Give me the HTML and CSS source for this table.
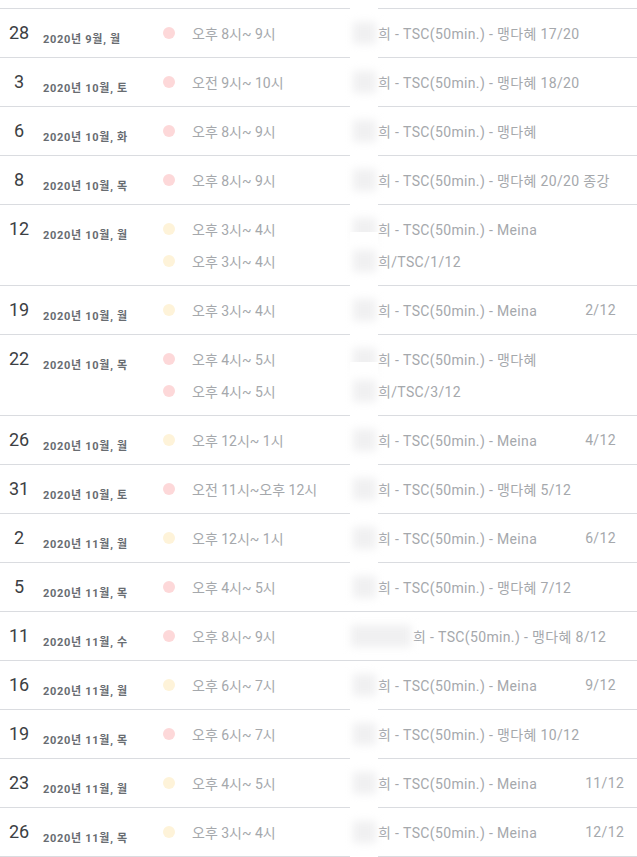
FILE: index.html
```html
<!DOCTYPE html>
<html lang="ko">
<head>
    <meta charset="UTF-8">
    <title>일정</title>
    <link rel="stylesheet" href="styles.css">
</head>
<body>
    <div class="agenda">
        <div class="day">
            <div class="date"><span class="num">28</span><span class="sub">2020년 9월, 월</span></div>
            <div class="events">
                <div class="event"><span class="dot pink"></span><span class="time">오후 8시~ 9시</span><span class="title"><span class="redact"></span>희 - TSC(50min.) - 맹다혜 17/20</span></div>
            </div>
        </div>
        <div class="day">
            <div class="date"><span class="num">3</span><span class="sub">2020년 10월, 토</span></div>
            <div class="events">
                <div class="event"><span class="dot pink"></span><span class="time">오전 9시~ 10시</span><span class="title"><span class="redact"></span>희 - TSC(50min.) - 맹다혜 18/20</span></div>
            </div>
        </div>
        <div class="day">
            <div class="date"><span class="num">6</span><span class="sub">2020년 10월, 화</span></div>
            <div class="events">
                <div class="event"><span class="dot pink"></span><span class="time">오후 8시~ 9시</span><span class="title"><span class="redact"></span>희 - TSC(50min.) - 맹다혜</span></div>
            </div>
        </div>
        <div class="day">
            <div class="date"><span class="num">8</span><span class="sub">2020년 10월, 목</span></div>
            <div class="events">
                <div class="event"><span class="dot pink"></span><span class="time">오후 8시~ 9시</span><span class="title"><span class="redact"></span>희 - TSC(50min.) - 맹다혜 20/20 종강</span></div>
            </div>
        </div>
        <div class="day">
            <div class="date"><span class="num">12</span><span class="sub">2020년 10월, 월</span></div>
            <div class="events">
                <div class="event"><span class="dot yellow"></span><span class="time">오후 3시~ 4시</span><span class="title"><span class="redact"></span>희 - TSC(50min.) - Meina</span></div>
                <div class="event"><span class="dot yellow"></span><span class="time">오후 3시~ 4시</span><span class="title"><span class="redact"></span>희/TSC/1/12</span></div>
            </div>
        </div>
        <div class="day">
            <div class="date"><span class="num">19</span><span class="sub">2020년 10월, 월</span></div>
            <div class="events">
                <div class="event"><span class="dot yellow"></span><span class="time">오후 3시~ 4시</span><span class="title"><span class="redact"></span>희 - TSC(50min.) - Meina<span class="count">2/12</span></span></div>
            </div>
        </div>
        <div class="day">
            <div class="date"><span class="num">22</span><span class="sub">2020년 10월, 목</span></div>
            <div class="events">
                <div class="event"><span class="dot pink"></span><span class="time">오후 4시~ 5시</span><span class="title"><span class="redact"></span>희 - TSC(50min.) - 맹다혜</span></div>
                <div class="event"><span class="dot pink"></span><span class="time">오후 4시~ 5시</span><span class="title"><span class="redact"></span>희/TSC/3/12</span></div>
            </div>
        </div>
        <div class="day">
            <div class="date"><span class="num">26</span><span class="sub">2020년 10월, 월</span></div>
            <div class="events">
                <div class="event"><span class="dot yellow"></span><span class="time">오후 12시~ 1시</span><span class="title"><span class="redact"></span>희 - TSC(50min.) - Meina<span class="count">4/12</span></span></div>
            </div>
        </div>
        <div class="day">
            <div class="date"><span class="num">31</span><span class="sub">2020년 10월, 토</span></div>
            <div class="events">
                <div class="event"><span class="dot pink"></span><span class="time">오전 11시~오후 12시</span><span class="title"><span class="redact"></span>희 - TSC(50min.) - 맹다혜 5/12</span></div>
            </div>
        </div>
        <div class="day">
            <div class="date"><span class="num">2</span><span class="sub">2020년 11월, 월</span></div>
            <div class="events">
                <div class="event"><span class="dot yellow"></span><span class="time">오후 12시~ 1시</span><span class="title"><span class="redact"></span>희 - TSC(50min.) - Meina<span class="count">6/12</span></span></div>
            </div>
        </div>
        <div class="day">
            <div class="date"><span class="num">5</span><span class="sub">2020년 11월, 목</span></div>
            <div class="events">
                <div class="event"><span class="dot pink"></span><span class="time">오후 4시~ 5시</span><span class="title"><span class="redact short"></span>희 - TSC(50min.) - 맹다혜 7/12</span></div>
            </div>
        </div>
        <div class="day">
            <div class="date"><span class="num">11</span><span class="sub">2020년 11월, 수</span></div>
            <div class="events">
                <div class="event"><span class="dot pink"></span><span class="time">오후 8시~ 9시</span><span class="title"><span class="redact wide"></span>희 - TSC(50min.) - 맹다혜 8/12</span></div>
            </div>
        </div>
        <div class="day">
            <div class="date"><span class="num">16</span><span class="sub">2020년 11월, 월</span></div>
            <div class="events">
                <div class="event"><span class="dot yellow"></span><span class="time">오후 6시~ 7시</span><span class="title"><span class="redact short"></span>희 - TSC(50min.) - Meina<span class="count">9/12</span></span></div>
            </div>
        </div>
        <div class="day">
            <div class="date"><span class="num">19</span><span class="sub">2020년 11월, 목</span></div>
            <div class="events">
                <div class="event"><span class="dot pink"></span><span class="time">오후 6시~ 7시</span><span class="title"><span class="redact"></span>희 - TSC(50min.) - 맹다혜 10/12</span></div>
            </div>
        </div>
        <div class="day">
            <div class="date"><span class="num">23</span><span class="sub">2020년 11월, 월</span></div>
            <div class="events">
                <div class="event"><span class="dot yellow"></span><span class="time">오후 4시~ 5시</span><span class="title"><span class="redact"></span>희 - TSC(50min.) - Meina<span class="count">11/12</span></span></div>
            </div>
        </div>
        <div class="day">
            <div class="date"><span class="num">26</span><span class="sub">2020년 11월, 목</span></div>
            <div class="events">
                <div class="event"><span class="dot yellow"></span><span class="time">오후 3시~ 4시</span><span class="title"><span class="redact"></span>희 - TSC(50min.) - Meina<span class="count">12/12</span></span></div>
            </div>
        </div>
    </div>
</body>
</html>
```

FILE: styles.css
```css
body {
    margin: 0;
    padding: 0;
    background: #fff;
    font-family: Roboto, "Noto Sans CJK KR", sans-serif;
}

.agenda {
    margin-top: 8px;
    border-top: 1px solid #dadce0;
}

.day {
    display: flex;
    padding: 8px 0;
    border-bottom: 1px solid #dadce0;
}

.date {
    width: 163px;
    height: 32px;
    display: flex;
    align-items: center;
    flex-shrink: 0;
}

.num {
    width: 38px;
    text-align: center;
    font-size: 18px;
    color: #3c4043;
    margin-top: -1px;
}

.sub {
    margin-left: 5px;
    margin-top: 9px;
    font-size: 11px;
    font-weight: 700;
    letter-spacing: 0.7px;
    color: #686c71;
}

.events {
    flex: 1;
}

.event {
    height: 32px;
    display: flex;
    align-items: center;
    font-size: 14px;
    color: #a5a8ac;
}

.dot {
    width: 12px;
    height: 12px;
    border-radius: 50%;
    margin-right: 17px;
    flex-shrink: 0;
}

.dot.pink {
    background: #fdd8d9;
}

.dot.yellow {
    background: #fef3d9;
}

.time {
    width: 158px;
    flex-shrink: 0;
    white-space: nowrap;
}

.title {
    display: flex;
    align-items: center;
    white-space: nowrap;
    letter-spacing: 0.35px;
}

.count {
    margin-left: 48px;
}

/* blurred name */
.redact {
    position: relative;
    display: inline-block;
    width: 28px;
    height: 24px;
}

.redact::before {
    content: '';
    position: absolute;
    left: 0;
    right: 0;
    top: -17px;
    bottom: -17px;
    background: #fff;
}

.redact::after {
    content: '';
    position: absolute;
    left: 3px;
    right: 2px;
    top: 1px;
    bottom: 1px;
    background: #f0f0f1;
    filter: blur(4px);
}

.redact.short::before,
.redact.wide::before {
    top: 0;
    bottom: 0;
}

.redact.wide {
    width: 65px;
    margin-left: -2px;
}
```
